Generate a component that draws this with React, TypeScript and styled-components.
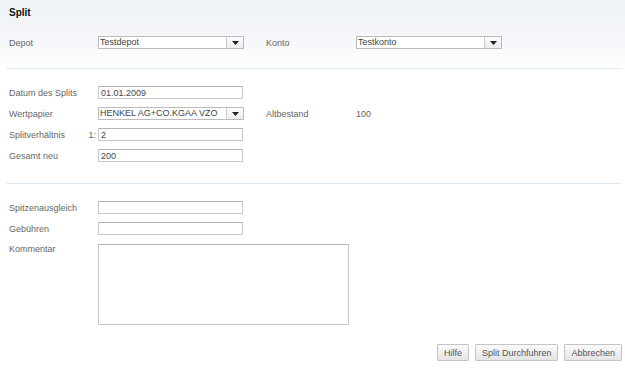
import React from 'react';
import styled, { createGlobalStyle } from 'styled-components';

const GlobalStyle = createGlobalStyle`
  html, body {
    margin: 0;
    padding: 0;
    background: #fff;
  }
  body {
    font-family: "Liberation Sans", Arial, sans-serif;
    font-size: 9px;
    color: #666;
  }
`;

interface SelectProps {
  value: string;
}

const Select: React.FC<SelectProps> = ({ value }) => (
  <SelectBox>
    <SelectValue>{value}</SelectValue>
    <SelectArrow>
      <svg width="7" height="4" viewBox="0 0 7 4">
        <path d="M0 0 L7 0 L3.5 4 Z" fill="#222" />
      </svg>
    </SelectArrow>
  </SelectBox>
);

const App: React.FC = () => {
  return (
    <Page>
      <GlobalStyle />
      <Header>Split</Header>

      <Section>
        <Row>
          <Label>Depot</Label>
          <Select value="Testdepot" />
          <Spacer />
          <Label>Konto</Label>
          <Select value="Testkonto" />
        </Row>
      </Section>

      <Divider />

      <Section>
        <Row>
          <Label>Datum des Splits</Label>
          <Input defaultValue="01.01.2009" />
        </Row>
        <Row>
          <Label>Wertpapier</Label>
          <Select value="HENKEL AG+CO.KGAA VZO" />
          <Spacer />
          <Label>Altbestand</Label>
          <Value>100</Value>
        </Row>
        <Row>
          <Label>
            Splitverhältnis<Ratio>1:</Ratio>
          </Label>
          <Input defaultValue="2" />
        </Row>
        <Row>
          <Label>Gesamt neu</Label>
          <Input defaultValue="200" />
        </Row>
      </Section>

      <Divider $after={17} $before={21} />

      <Section>
        <Row>
          <Label>Spitzenausgleich</Label>
          <Input />
        </Row>
        <Row>
          <Label>Gebühren</Label>
          <Input />
        </Row>
        <TallRow>
          <Label>Kommentar</Label>
          <Comment />
        </TallRow>
      </Section>

      <Actions>
        <Button>Hilfe</Button>
        <Button>Split Durchfuhren</Button>
        <Button>Abbrechen</Button>
      </Actions>
    </Page>
  );
};

// Styled Components

const Page = styled.div`
  width: 625px;
  height: 382px;
  box-sizing: border-box;
  padding: 0 3px 0 9px;
  background: linear-gradient(#eef2f6 0, #f5f7fa 40px, #fff 72px);
`;

const Header = styled.div`
  font-weight: bold;
  font-size: 10px;
  color: #111;
  padding-top: 7px;
  height: 36px;
  box-sizing: border-box;
`;

const Section = styled.div`
  display: flex;
  flex-direction: column;
  gap: 8px;
`;

const Row = styled.div`
  display: grid;
  grid-template-columns: 89px 146px 22px 90px 146px;
  align-items: center;
  height: 13px;
`;

const TallRow = styled(Row)`
  height: 81px;
  margin-top: 1px;
  align-items: start;
`;

const Label = styled.div`
  display: flex;
  justify-content: space-between;
  padding-right: 2px;
  color: #666;
  white-space: nowrap;
`;

const Ratio = styled.span`
  color: #666;
`;

const Value = styled.div`
  color: #666;
`;

const Spacer = styled.div``;

const Divider = styled.div<{ $before?: number; $after?: number }>`
  height: 1px;
  background: #dfeaf3;
  margin: ${(p) => p.$before ?? 19}px 0 ${(p) => p.$after ?? 17}px -3px;
`;

const Input = styled.input`
  box-sizing: border-box;
  width: 145px;
  height: 13px;
  margin: 0;
  padding: 0 2px;
  border: 1px solid #c8c8c8;
  border-top-color: #b4b4b4;
  background: #fff;
  font: inherit;
  font-size: 9px;
  color: #444;
  outline: none;
`;

const Comment = styled.textarea`
  box-sizing: border-box;
  width: 251px;
  height: 81px;
  margin: 0;
  padding: 2px;
  border: 1px solid #c8c8c8;
  border-top-color: #b4b4b4;
  background: #fff;
  resize: none;
  font: inherit;
  outline: none;
`;

const SelectBox = styled.div`
  box-sizing: border-box;
  display: flex;
  width: 146px;
  height: 13px;
  border: 1px solid #bcbcbc;
  background: #fff;
`;

const SelectValue = styled.div`
  flex: 1;
  padding-left: 1px;
  line-height: 11px;
  color: #444;
  white-space: nowrap;
  overflow: hidden;
`;

const SelectArrow = styled.div`
  width: 16px;
  display: flex;
  align-items: center;
  justify-content: center;
  border-left: 1px solid #cccccc;
  background: linear-gradient(#fdfdfd, #ececec);
`;

const Actions = styled.div`
  display: flex;
  justify-content: flex-end;
  gap: 6px;
  margin-top: 19px;
`;

const Button = styled.button`
  height: 17px;
  padding: 0 6px;
  border: 1px solid #c4c4c4;
  border-radius: 1px;
  background: linear-gradient(#fbfbfb, #e4e4e4);
  font: inherit;
  font-size: 9px;
  color: #555;
  cursor: pointer;
`;

export default App;
